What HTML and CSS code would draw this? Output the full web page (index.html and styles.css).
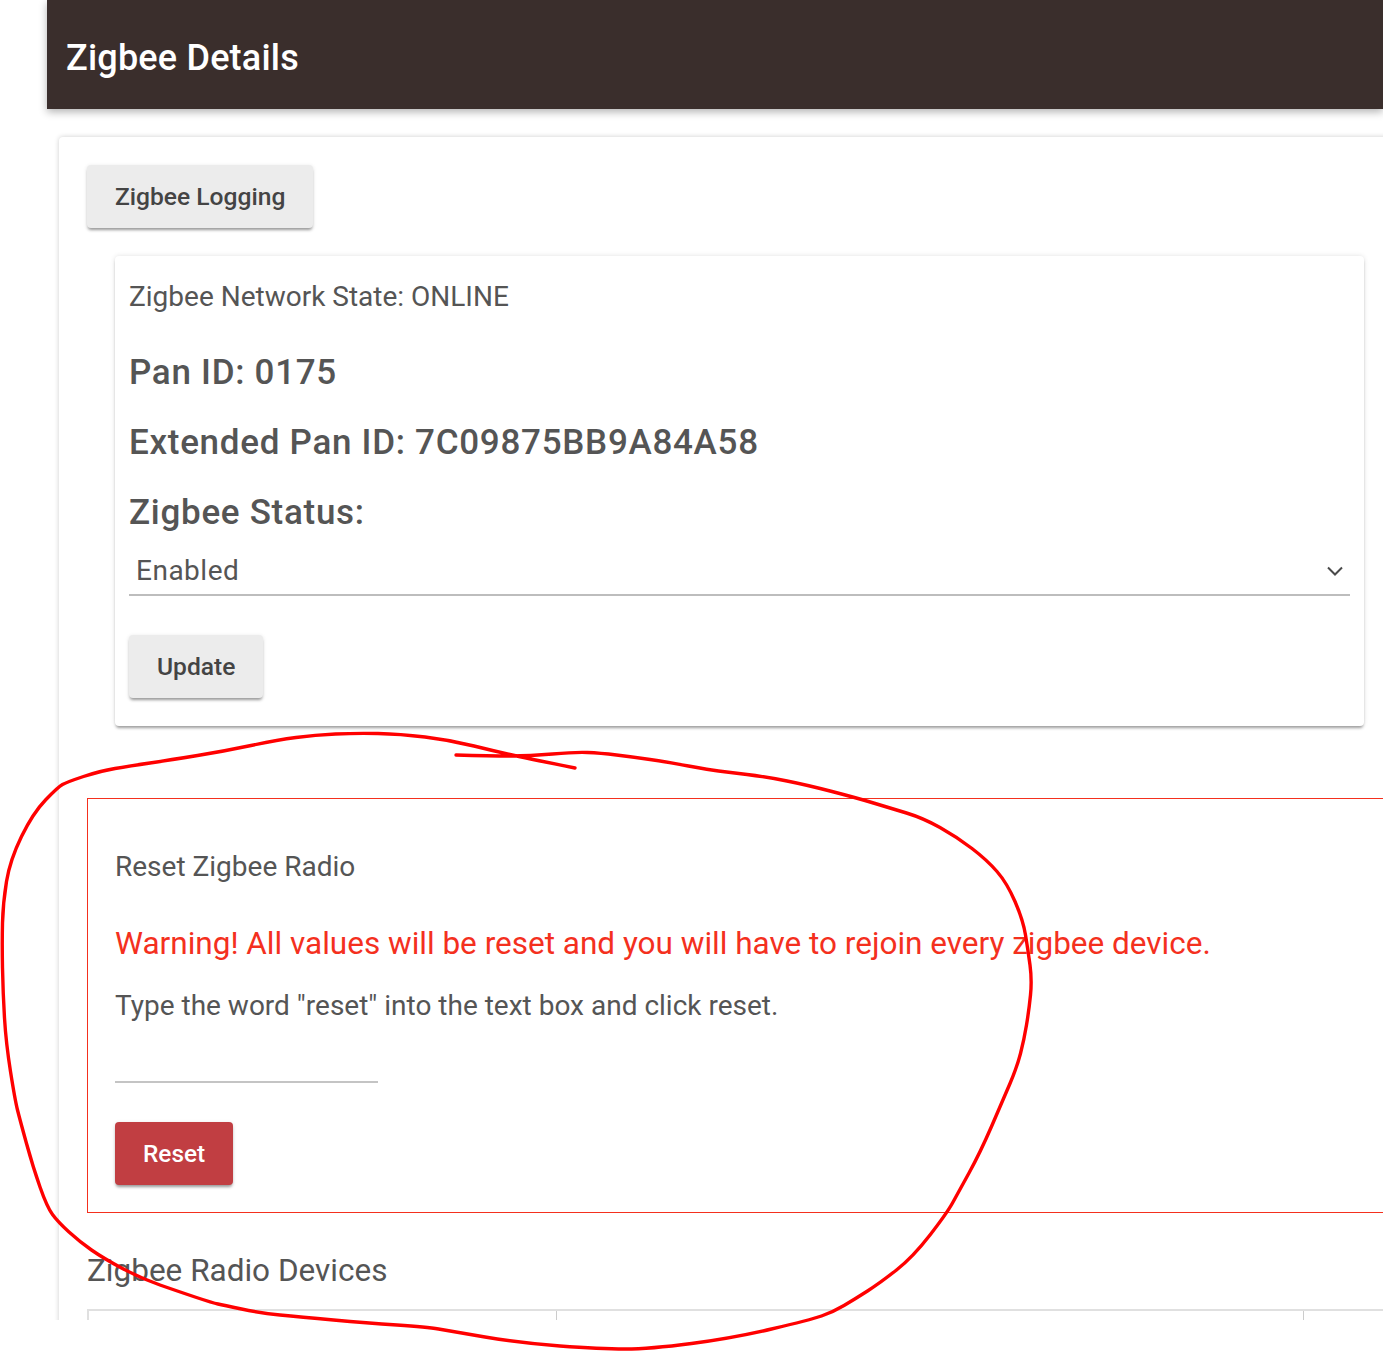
FILE: index.html
```html
<!DOCTYPE html>
<html lang="en">
<head>
<meta charset="utf-8">
<title>Zigbee Details</title>
<link rel="stylesheet" href="styles.css">
</head>
<body>
<div class="stage">
  <main class="main">
    <header class="topbar"><h1 class="topbar-title">Zigbee Details</h1></header>
    <section class="page-card">
      <button class="btn btn-grey" type="button">Zigbee Logging</button>
      <div class="network-card">
        <p class="state">Zigbee Network State: ONLINE</p>
        <h2 class="info first">Pan ID: 0175</h2>
        <h2 class="info">Extended Pan ID: 7C09875BB9A84A58</h2>
        <h2 class="info">Zigbee Status:</h2>
        <div class="select">
          <span>Enabled</span>
          <svg class="chevron" width="16" height="10" viewBox="0 0 16 10"><path d="M1 1.5 L8 8.5 L15 1.5" fill="none" stroke="#4a4a4a" stroke-width="2"/></svg>
        </div>
        <button class="btn btn-grey btn-update" type="button">Update</button>
      </div>
      <div class="reset-box">
        <p class="reset-title">Reset Zigbee Radio</p>
        <p class="warning">Warning! All values will be reset and you will have to rejoin every zigbee device.</p>
        <p class="instructions">Type the word "reset" into the text box and click reset.</p>
        <div class="reset-input"></div>
        <button class="btn btn-red" type="button">Reset</button>
      </div>
      <h3 class="devices-title">Zigbee Radio Devices</h3>
      <div class="devices-table">
        <div class="cell cell-a"></div>
        <div class="cell cell-b"></div>
        <div class="cell cell-c"></div>
      </div>
    </section>
  </main>
</div>
<svg class="scribble" width="1383" height="1351" viewBox="0 0 1383 1351">
  <path d="M575 768 Q540 761 519 756.5 Q498 752 474 746 Q450 740 425 737 Q400 734 378 733.5 Q356 733 335.5 734 Q315 735 296 737.5 Q277 740 251 745.5 Q225 751 197.5 755.5 Q170 760 150 763 Q130 766 115 768.5 Q100 771 83.5 776.5 Q67 782 62.5 784.5 Q58 787 45.5 800 Q33 813 21.5 836.5 Q10 860 6.5 881.5 Q3 903 2.5 923 Q2 943 2.5 968 Q3 993 4.5 1018 Q6 1043 10.5 1071.5 Q15 1100 17.5 1110 Q20 1120 26.5 1143.5 Q33 1167 40 1187 Q47 1207 52.5 1214.5 Q58 1222 69 1232 Q80 1242 91.5 1250 Q103 1258 121.5 1268 Q140 1278 160 1285 Q180 1292 196.5 1297.5 Q213 1303 218 1304 Q223 1305 241.5 1309 Q260 1313 280 1315 Q300 1317 333.5 1320 Q367 1323 397 1325 Q427 1327 438.5 1329 Q450 1331 485 1337 Q520 1343 560 1346 Q600 1349 625 1349 Q650 1349 691.5 1343.5 Q733 1338 771.5 1329 Q810 1320 821.5 1316 Q833 1312 844 1305.5 Q855 1299 867.5 1291 Q880 1283 896.5 1270 Q913 1257 930 1235 Q947 1213 952.5 1203 Q958 1193 969 1173 Q980 1153 991.5 1126.5 Q1003 1100 1010 1083.5 Q1017 1067 1020.5 1053.5 Q1024 1040 1026.5 1025 Q1029 1010 1030.5 995 Q1032 980 1030 965 Q1028 950 1025.5 935 Q1023 920 1015 901.5 Q1007 883 997 871.5 Q987 860 972 848.5 Q957 837 940 827.5 Q923 818 906.5 813 Q890 808 873.5 803 Q857 798 832 791.5 Q807 785 787 781 Q767 777 747 774.5 Q727 772 718.5 771 Q710 770 688.5 766 Q667 762 650 759.5 Q633 757 616.5 755 Q600 753 587.5 752.5 Q575 752 552.5 754 Q530 756 510 756 Q490 756 456 755" fill="none" stroke="#f00" stroke-width="3.4" stroke-linecap="round" stroke-linejoin="round"/>
</svg>
</body>
</html>
```
FILE: styles.css
```css
* { box-sizing: border-box; }
html, body { margin: 0; padding: 0; background: #fff; }
body { width: 1383px; height: 1351px; overflow: hidden; position: relative; font-family: Roboto, "Liberation Sans", sans-serif; color: #555; }
.stage { height: 1320px; overflow: hidden; padding-left: 47px; }
.main { width: 1336px; }
.topbar { height: 109px; background: #3a2e2c; padding: 6px 0 0 19px; display: flex; align-items: center; box-shadow: 0 3px 8px rgba(0,0,0,.3); position: relative; }
.topbar-title { margin: 0; color: #fff; font-size: 36px; font-weight: 500; line-height: 1; letter-spacing: .2px; }
.page-card { margin: 28px 0 0 12px; width: 1400px; height: 1300px; padding: 28px; background: #fff; border-radius: 4px; box-shadow: 0 0 5px rgba(0,0,0,.2); }
.btn { display: block; border: 0; border-radius: 4px; height: 63px; font-family: inherit; font-size: 24.6px; font-weight: 500; padding: 0 28px; box-shadow: 0 3px 3px -1px rgba(0,0,0,.35), 0 1px 4px rgba(0,0,0,.12); }
.btn-grey { background: #ececec; color: #444; }
.network-card { margin: 28px 0 0 28px; width: 1249px; height: 470px; padding: 14px; background: #fff; border-radius: 4px; box-shadow: 0 3px 3px -1px rgba(0,0,0,.35), 0 0 5px rgba(0,0,0,.12); }
.state { margin: 0; font-size: 28px; line-height: 54px; height: 52px; font-weight: 400; }
.info { margin: 0; font-size: 35px; font-weight: 500; line-height: 42px; letter-spacing: .71px; padding-top: 28px; }
.info.first { padding-top: 30px; }
.select { margin-top: 13px; width: 1221px; height: 49px; border-bottom: 2px solid #bdbdbd; padding: 0 7px; display: flex; align-items: center; justify-content: space-between; font-size: 28px; letter-spacing: .5px; }
.btn-update { margin-top: 39px; }
.reset-box { margin-top: 72px; width: 1400px; height: 415px; border: 1px solid #f4301e; padding: 27px; }
.reset-title { margin: 0; font-size: 28px; line-height: 82px; height: 92px; font-weight: 400; }
.warning { margin: 0; color: #f4301e; font-size: 31.5px; line-height: 52px; height: 51px; font-weight: 400; }
.instructions { margin: 0; font-size: 28px; line-height: 74px; height: 74px; font-weight: 400; }
.reset-input { width: 263px; height: 40px; border-bottom: 2px solid #c4c4c4; }
.btn-red { margin-top: 39px; background: #c13e42; color: #fff; font-size: 24.4px; }
.devices-title { margin: 36px 0 0; font-size: 31.5px; font-weight: 400; line-height: 44px; }
.devices-table { margin-top: 16px; display: flex; height: 40px; border-top: 2px solid #e0e0e0; border-left: 2px solid #e0e0e0; }
.cell-a { width: 468px; border-right: 1px solid #ccc; }
.cell-b { width: 747px; border-right: 1px solid #ccc; }
.scribble { position: absolute; top: 0; left: 0; pointer-events: none; }
```
